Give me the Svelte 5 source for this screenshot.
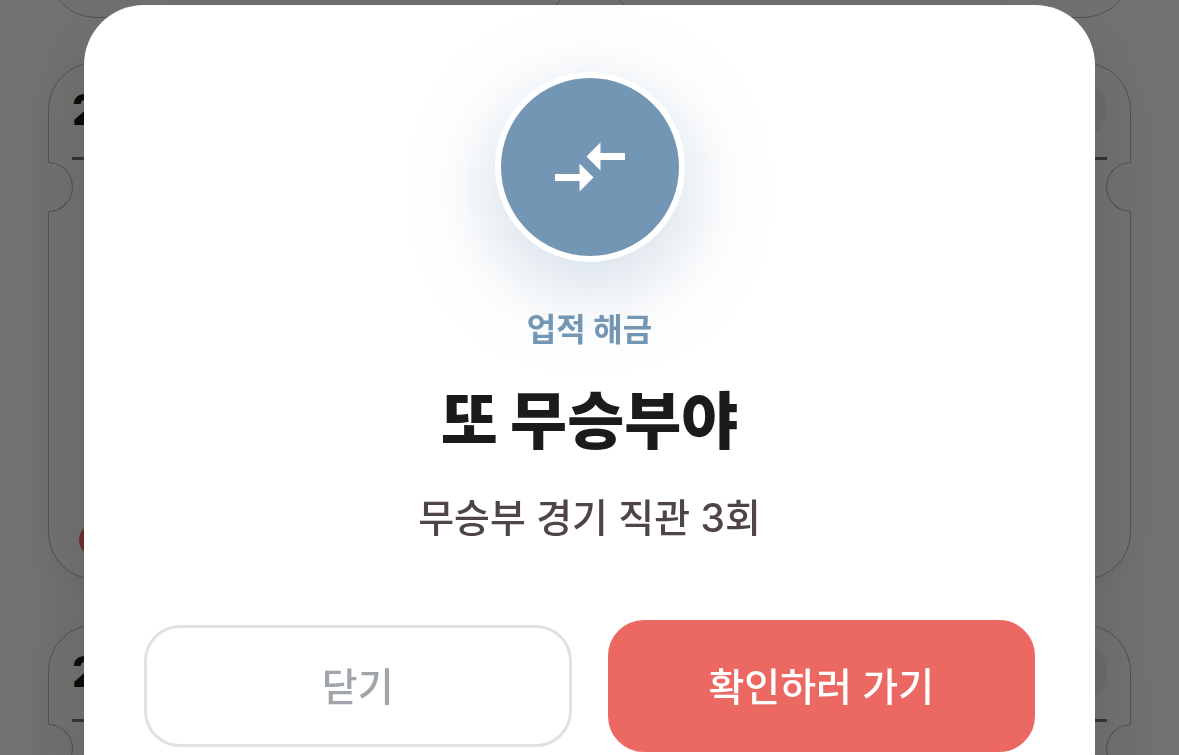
<script lang="ts">
  let open = $state(true);

  const tickets = [
    { id: 1, day: '2', tone: 'gray' },
    { id: 2, day: '2', tone: 'green' },
  ];

  function close() {
    open = false;
  }
</script>

<div class="page">
  <div class="summary">
    <div class="summary-card"></div>
    <div class="summary-card"></div>
  </div>

  {#each tickets as ticket (ticket.id)}
    <article class="ticket">
      <header class="ticket-header">
        <span class="day">{ticket.day}</span>
        <span class="badge {ticket.tone}"></span>
      </header>
      <span class="notch left"></span>
      <span class="notch right"></span>
      <div class="ticket-body">
        <span class="tag"></span>
      </div>
    </article>
  {/each}
</div>

{#if open}
  <div class="overlay">
    <div class="modal" role="dialog" aria-modal="true" aria-labelledby="title">
      <div class="medal">
        <svg viewBox="0 0 24 24" aria-hidden="true">
          <path d="M9.01 14H2v2h7.01v3L13 15l-3.99-4v3zm5.98-1v-3H22V8h-7.01V5L11 9l3.99 4z" />
        </svg>
      </div>
      <p class="label">업적 해금</p>
      <h1 class="title" id="title">또 무승부야</h1>
      <p class="desc">무승부 경기 직관 3회</p>
      <div class="actions">
        <button class="btn secondary" onclick={close}>닫기</button>
        <button class="btn primary" onclick={close}>확인하러 가기</button>
      </div>
    </div>
  </div>
{/if}

<style>
  :global(body) {
    margin: 0;
    background: #f6f6fb;
    font-family: Inter, 'Noto Sans CJK KR', sans-serif;
  }

  .page {
    height: 100vh;
    overflow: hidden;
    box-sizing: border-box;
    padding: 0 48px;
    display: flex;
    flex-direction: column;
    gap: 44px;
  }

  .summary {
    display: flex;
    gap: 36px;
    flex-shrink: 0;
    height: 18px;
    align-items: flex-end;
  }

  .summary-card {
    flex: 1;
    height: 120px;
    box-sizing: border-box;
    border: 1px solid #b0b0b4;
    border-radius: 48px;
    background: #f5f5f5;
  }

  .ticket {
    position: relative;
    flex-shrink: 0;
    height: 518px;
    box-sizing: border-box;
    display: flex;
    flex-direction: column;
    padding: 0 23px;
    border: 1px solid #b0b0b4;
    border-radius: 48px;
    background: #f5f5f5;
    box-shadow: 0 6px 24px rgba(0, 0, 0, 0.05);
  }

  .ticket-header {
    display: flex;
    align-items: center;
    justify-content: space-between;
    padding: 17px 0;
    border-bottom: 3px solid #7c7272;
  }

  .day {
    font-size: 42px;
    line-height: 60px;
    font-weight: 800;
    color: #1a1b1d;
  }

  .badge {
    width: 60px;
    height: 60px;
    border-radius: 50%;
  }

  .badge.gray {
    background: #ebebeb;
  }

  .badge.green {
    background: #e0eae8;
  }

  .notch {
    position: absolute;
    top: 99px;
    width: 25px;
    height: 50px;
    box-sizing: border-box;
    border: 1px solid #b0b0b4;
    background: #f3f3f6;
  }

  .notch.left {
    left: -1px;
    border-left-color: #f3f3f6;
    border-radius: 0 25px 25px 0;
  }

  .notch.right {
    right: -1px;
    border-right-color: #f3f3f6;
    border-radius: 25px 0 0 25px;
  }

  .ticket-body {
    flex: 1;
    display: flex;
    align-items: flex-end;
    padding: 0 7px 22px;
  }

  .tag {
    width: 100px;
    height: 34px;
    border-radius: 17px;
    background: #eb6864;
  }

  .overlay {
    position: fixed;
    inset: 0;
    overflow: hidden;
    display: flex;
    align-items: flex-start;
    padding: 5px 84px 0;
    background: rgba(0, 0, 0, 0.54);
  }

  .modal {
    flex: 1;
    display: flex;
    flex-direction: column;
    align-items: center;
    padding: 67px 60px 60px;
    border-radius: 60px;
    background: #fff;
    box-shadow: 0 24px 72px rgba(0, 0, 0, 0.12);
  }

  .medal {
    width: 178px;
    height: 178px;
    display: flex;
    align-items: center;
    justify-content: center;
    border: 6px solid #fff;
    border-radius: 50%;
    background: #7396b4;
    box-shadow: 0 24px 84px rgba(115, 150, 180, 0.35);
  }

  .medal svg {
    width: 84px;
    height: 84px;
    fill: #fff;
  }

  .label {
    margin: 50px 0 0;
    font-size: 32px;
    line-height: 36px;
    font-weight: 700;
    color: #7396b4;
  }

  .title {
    margin: 34px 0 0;
    font-size: 62px;
    line-height: 80px;
    font-weight: 900;
    color: #1a1b1d;
  }

  .desc {
    margin: 32px 0 0;
    font-size: 39px;
    line-height: 48px;
    font-weight: 500;
    color: #4f4545;
  }

  .actions {
    align-self: stretch;
    display: flex;
    align-items: center;
    gap: 36px;
    margin-top: 78px;
  }

  .btn {
    flex: 1;
    box-sizing: border-box;
    padding: 0 0 4px;
    border: 3px solid;
    border-radius: 36px;
    font-family: inherit;
    font-size: 39px;
    font-weight: 500;
    cursor: pointer;
  }

  .secondary {
    height: 122px;
    border-color: #dde2e6;
    background: #fff;
    color: #9fa5aa;
  }

  .primary {
    height: 132px;
    border-color: #ec6863;
    background: #ec6863;
    color: #fff;
  }
</style>
